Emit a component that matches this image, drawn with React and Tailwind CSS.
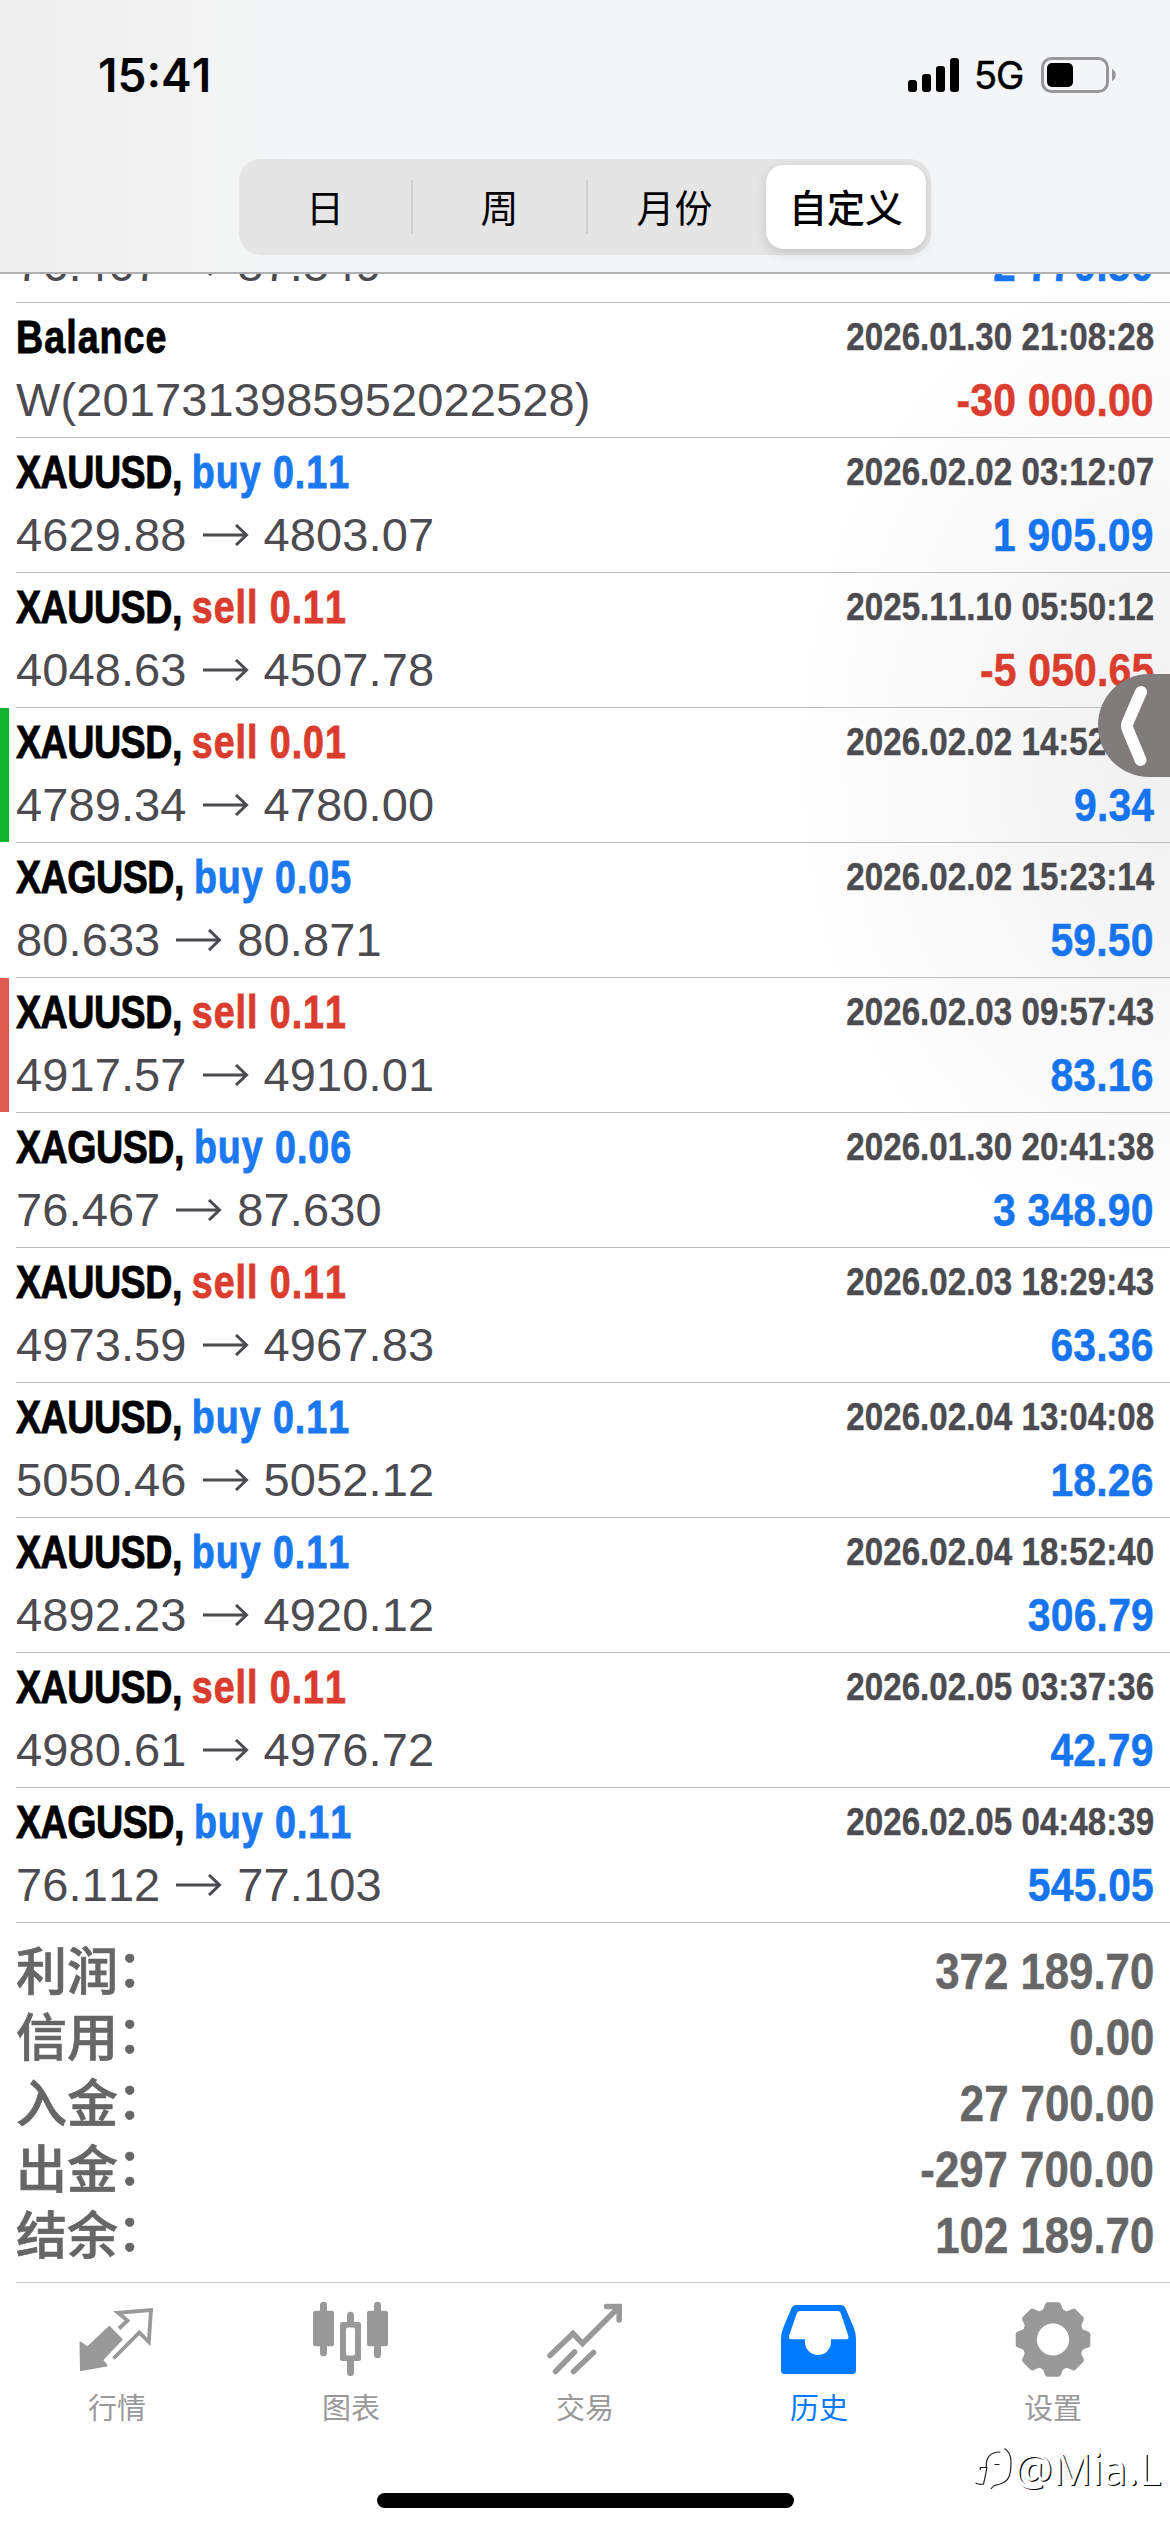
import React from "react";

const ARIAL = "font-['Liberation_Sans',Arial,sans-serif]";
const CJK = "font-['Inter','Noto_Sans_CJK_SC',sans-serif]";

const scrolledDeal = { type: "buy", open: "76.467", close: "87.549", profit: "2 770.50" };

const deals = [
  { symbol: "Balance", comment: "W(2017313985952022528)", time: "2026.01.30 21:08:28", profit: "-30 000.00" },
  { symbol: "XAUUSD", type: "buy", volume: "0.11", open: "4629.88", close: "4803.07", time: "2026.02.02 03:12:07", profit: "1 905.09" },
  { symbol: "XAUUSD", type: "sell", volume: "0.11", open: "4048.63", close: "4507.78", time: "2025.11.10 05:50:12", profit: "-5 050.65" },
  { symbol: "XAUUSD", type: "sell", volume: "0.01", open: "4789.34", close: "4780.00", time: "2026.02.02 14:52:31", profit: "9.34", mark: "bg-[#12b32f]" },
  { symbol: "XAGUSD", type: "buy", volume: "0.05", open: "80.633", close: "80.871", time: "2026.02.02 15:23:14", profit: "59.50" },
  { symbol: "XAUUSD", type: "sell", volume: "0.11", open: "4917.57", close: "4910.01", time: "2026.02.03 09:57:43", profit: "83.16", mark: "bg-[#de5b4e]" },
  { symbol: "XAGUSD", type: "buy", volume: "0.06", open: "76.467", close: "87.630", time: "2026.01.30 20:41:38", profit: "3 348.90" },
  { symbol: "XAUUSD", type: "sell", volume: "0.11", open: "4973.59", close: "4967.83", time: "2026.02.03 18:29:43", profit: "63.36" },
  { symbol: "XAUUSD", type: "buy", volume: "0.11", open: "5050.46", close: "5052.12", time: "2026.02.04 13:04:08", profit: "18.26" },
  { symbol: "XAUUSD", type: "buy", volume: "0.11", open: "4892.23", close: "4920.12", time: "2026.02.04 18:52:40", profit: "306.79" },
  { symbol: "XAUUSD", type: "sell", volume: "0.11", open: "4980.61", close: "4976.72", time: "2026.02.05 03:37:36", profit: "42.79" },
  { symbol: "XAGUSD", type: "buy", volume: "0.11", open: "76.112", close: "77.103", time: "2026.02.05 04:48:39", profit: "545.05" },
];

const summary = [
  { label: "利润", value: "372 189.70" },
  { label: "信用", value: "0.00" },
  { label: "入金", value: "27 700.00" },
  { label: "出金", value: "-297 700.00" },
  { label: "结余", value: "102 189.70" },
];

function StatusBar() {
  return (
    <div className="flex h-[159px] items-start justify-between pt-[49px] pr-[53px] pl-[98px] text-black">
      <span className="font-['Inter',sans-serif] text-[46px] leading-[52px] font-semibold">
        15:41
      </span>
      <div className="flex h-[52px] items-center">
        <svg width="52" height="34" viewBox="0 0 52 34">
          <rect x="0" y="22" width="9" height="12" rx="3" />
          <rect x="14" y="16" width="9" height="18" rx="3" />
          <rect x="28" y="8" width="9" height="26" rx="3" />
          <rect x="42" y="0" width="9" height="34" rx="3" />
        </svg>
        <span className="ml-[14px] w-[52px] font-['Inter',sans-serif] text-[38px] leading-[52px] tracking-[-1px] [-webkit-text-stroke:0.5px]">
          5G
        </span>
        <svg className="ml-[15px]" width="76" height="36" viewBox="0 0 76 36">
          <rect x="1.5" y="1.5" width="65" height="33" rx="9" fill="none" stroke="#98989b" strokeWidth="3" />
          <rect x="6" y="6" width="26" height="24" rx="5" />
          <path d="M71 12c5 2 5 10 0 12z" fill="#98989b" />
        </svg>
      </div>
    </div>
  );
}

function PeriodTabs() {
  return (
    <div
      className={`mx-auto flex h-[96px] w-[692px] items-center rounded-[22px] bg-[#e5e5e6] pr-[5px] text-[38px] text-black ${CJK}`}
    >
      <div className="w-[172px] pt-[2px] text-center">日</div>
      <div className="h-[54px] w-[2px] bg-[#cfcfd1]" />
      <div className="w-[173px] pt-[2px] text-center">周</div>
      <div className="h-[54px] w-[2px] bg-[#cfcfd1]" />
      <div className="w-[173px] pt-[2px] text-center">月份</div>
      <div className="ml-auto flex h-[84px] w-[160px] items-center justify-center rounded-[18px] bg-white pt-[2px] font-medium shadow-[0_4px_12px_rgba(0,0,0,0.14)]">
        自定义
      </div>
    </div>
  );
}

function DealResult({ deal }) {
  const profitColor = deal.profit.startsWith("-") ? "text-[#da3c2e]" : "text-[#1674ee]";

  return (
    <div className="flex h-[64px] items-center justify-between whitespace-nowrap">
      {deal.comment ? (
        <div className="text-[47px] leading-[54px] tracking-[0.1px] text-[#4b4b50]">{deal.comment}</div>
      ) : (
        <div className="flex items-center text-[47px] leading-[54px] tracking-[0.1px] text-[#4b4b50]">
          {deal.open}
          <svg className="mx-[15px]" width="47" height="22" viewBox="0 0 47 22" fill="none" stroke="currentColor" strokeWidth="3">
            <path d="M1 11h43M34 1l10.500 10L34 21" />
          </svg>
          {deal.close}
        </div>
      )}
      <div
        className={`origin-right scale-x-[0.87] text-[47px] leading-[54px] font-bold tracking-[0.2px] [-webkit-text-stroke:0.5px] ${profitColor}`}
      >
        {deal.profit}
      </div>
    </div>
  );
}

function DealRow({ deal }) {
  const typeColor = deal.type === "buy" ? "text-[#1a78f0]" : "text-[#da3c2e]";

  return (
    <div className="flex h-[135px]">
      <div className={`h-[134px] w-[9px] ${deal.mark || ""}`} />
      <div className="ml-[7px] flex-1 border-b border-[#bcbcbf] pt-[3px] pr-[16px]">
        <div className="flex h-[62px] items-center justify-between font-bold whitespace-nowrap">
          <div className="origin-left scale-x-[0.8] text-[47px] leading-[54px] text-black [-webkit-text-stroke:0.9px]">
            {deal.type ? (
              <>
                <span className="tracking-[-0.6px]">{deal.symbol}, </span>
                <span className={`tracking-[1.2px] ${typeColor}`}>
                  {deal.type} {deal.volume}
                </span>
              </>
            ) : (
              <span className="tracking-[1.3px]">{deal.symbol}</span>
            )}
          </div>
          <div className="origin-right scale-x-[0.85] text-[39px] leading-[46px] text-[#4b4b50] [-webkit-text-stroke:0.4px]">
            {deal.time}
          </div>
        </div>
        <DealResult deal={deal} />
      </div>
    </div>
  );
}

function Summary() {
  return (
    <div className="ml-[16px] h-[360px] border-b border-[#c4c4c7] pt-[16px] pr-[16px] text-[#666]">
      {summary.map((item) => (
        <div key={item.label} className="flex h-[66px] items-center justify-between font-bold">
          <div className="relative -top-[4px] flex items-center font-['Noto_Sans_CJK_SC',sans-serif] text-[51px] leading-[60px] font-medium [-webkit-text-stroke:0.7px]">
            {item.label}
            <span className="relative -top-[3px] -left-[1px]">：</span>
          </div>
          <div className="origin-right scale-x-[0.875] text-[50px] leading-[58px] [-webkit-text-stroke:0.5px]">
            {item.value}
          </div>
        </div>
      ))}
    </div>
  );
}

function QuotesIcon() {
  return (
    <svg width="80" height="80" viewBox="0 0 80 80">
      <path
        d="M3.500 42.500l7 5 21.800-20.500L44.500 39.500 25 60l4.500 5.500L4 70z"
        fill="currentColor"
        stroke="currentColor"
        strokeWidth="2"
        strokeLinejoin="round"
      />
      <path
        d="M42 28.500l8.500-8L41 12.800l33-2.800-2.200 32-9.500-9.500L36.500 58.500"
        fill="none"
        stroke="currentColor"
        strokeWidth="3.800"
      />
    </svg>
  );
}

function ChartIcon() {
  return (
    <svg width="80" height="80" viewBox="0 0 80 80" fill="currentColor">
      <rect x="2" y="10.700" width="21" height="35.500" rx="2.500" />
      <rect x="9" y="1.700" width="7" height="54.500" rx="3.500" />
      <path fillRule="evenodd" d="M31.500 22h16a2.500 2.500 0 0 1 2.500 2.500v34a2.500 2.500 0 0 1-2.500 2.500h-16a2.500 2.500 0 0 1-2.500-2.500v-34a2.500 2.500 0 0 1 2.500-2.500zM37 27.500q-2 0-2 2v24q0 2 2 2h5q2 0 2-2v-24q0-2-2-2z" />
      <path d="M36 26V15.200a3.500 3.500 0 0 1 7 0V26zM36 58v14.500a3.500 3.500 0 0 0 7 0V58z" />
      <rect x="56" y="10.700" width="21" height="35.500" rx="2.500" />
      <rect x="63" y="1.700" width="7" height="56.500" rx="3.500" />
    </svg>
  );
}

function TradeIcon() {
  return (
    <svg width="80" height="80" viewBox="0 0 80 80" fill="none" stroke="currentColor" strokeWidth="5.500" strokeLinecap="round">
      <path d="M5 55.500L28 33.500l9.500 10L74 7" />
      <path d="M61.500 6.500h12.700v13.500" />
      <path d="M29.500 52L10.500 71.500M48.500 52.500L28.500 71.500" />
    </svg>
  );
}

function HistoryIcon() {
  return (
    <svg width="80" height="80" viewBox="0 0 80 80" fill="currentColor">
      <path
        fillRule="evenodd"
        d="M17.500 5h44q3.500 0 5 3.200L74.500 27q2.500 6 2.500 12v31.500q0 3.500-3.500 3.500h-68Q2 74 2 70.500V39q0-6 2.500-12L12.500 8.200Q14 5 17.500 5zM21 11q-2.200 0-3.200 2.300L10.200 35.500Q9 39.300 12 39.300h14V42a13 13 0 0 0 26 0v-2.700h15.500q2.800 0 1.700-3.800L61.800 13.300Q61 11 58.500 11z"
      />
    </svg>
  );
}

function SettingsIcon() {
  return (
    <svg width="80" height="80" viewBox="-40 -39.500 80 80" fill="currentColor">
      {[0, 45, 90, 135, 180, 225, 270, 315].map((angle) => (
        <path
          key={angle}
          transform={`rotate(${angle})`}
          d="M-5.500-37.300h11q1.500 0 2.500 2L9.500-31q1.200 2.500 3.500 2.500l-5 12H-8l-5-12q2.300 0 3.500-2.500L-8-35.300q1-2 2.500-2z"
        />
      ))}
      <circle r="23" fill="none" stroke="currentColor" strokeWidth="14" />
      <circle r="15.700" fill="white" />
    </svg>
  );
}

const tabs = [
  { label: "行情", Icon: QuotesIcon },
  { label: "图表", Icon: ChartIcon },
  { label: "交易", Icon: TradeIcon },
  { label: "历史", Icon: HistoryIcon, active: true },
  { label: "设置", Icon: SettingsIcon },
];

function TabBar() {
  return (
    <div className="flex pt-[17px]">
      {tabs.map(({ label, Icon, active }) => (
        <div
          key={label}
          className={`flex flex-1 flex-col items-center ${active ? "text-[#007aff]" : "text-[#999]"}`}
        >
          <Icon />
          <span className={`mt-[9px] text-[29px] leading-[40px] ${CJK}`}>{label}</span>
        </div>
      ))}
    </div>
  );
}

function Watermark() {
  return (
    <div className="absolute top-[2443px] left-[973px] flex items-center">
      <svg width="41" height="48" viewBox="0 0 41 48" fill="none" stroke="#222" strokeWidth="1.200">
        <path d="M7.300 25v-2.500h6q-1-15.500 14-15.500M31.500 3.500q6.500 4 6.500 13c0 14-2 20-11 22.500q-7 1-9 5" />
        <path d="M14 22q-1.500 9-3.500 17-4 1-8-1M21.500 19.500h5" />
      </svg>
      <span className="font-['Noto_Sans',sans-serif] text-[43px] leading-[52px] text-white [text-shadow:1.3px_1.3px_0_#000]">
        @Mia.L
      </span>
    </div>
  );
}

export default function App() {
  return (
    <div
      className={`relative h-[2532px] w-[1170px] overflow-hidden bg-white bg-[radial-gradient(ellipse_400px_540px_at_1170px_760px,#f0f0f1_0%,#f9f9f9_55%,#ffffff_100%)] [font-kerning:none] ${ARIAL}`}
    >
      <header className="h-[274px] border-b-2 border-[#b0b0b2] bg-linear-to-r from-[#efefef] via-[#f4f5f6] via-25% to-[#f4f5f7]">
        <StatusBar />
        <PeriodTabs />
      </header>

      {/* row scrolled half way under the header */}
      <div className="ml-[16px] h-[29px] overflow-hidden border-b border-[#bcbcbf] pr-[16px]">
        <div className="-mt-[41px]">
          <DealResult deal={scrolledDeal} />
        </div>
      </div>

      {deals.map((deal) => (
        <DealRow key={`${deal.time}-${deal.profit}`} deal={deal} />
      ))}

      <Summary />
      <TabBar />

      <div className="mx-auto mt-[64px] h-[15px] w-[417px] rounded-full bg-black" />

      {/* side drawer handle */}
      <div className="absolute top-[674px] right-0 flex h-[103px] w-[72px] items-center rounded-l-[51px] bg-[#7f7c7b] pl-[22px]">
        <svg width="28" height="84" viewBox="0 0 28 84" fill="none" stroke="white" strokeWidth="12" strokeLinecap="round" strokeLinejoin="round">
          <path d="M21 8Q13 26 8 38q-2 4 0 8 5 12 12.500 30" />
        </svg>
      </div>

      <Watermark />
    </div>
  );
}
